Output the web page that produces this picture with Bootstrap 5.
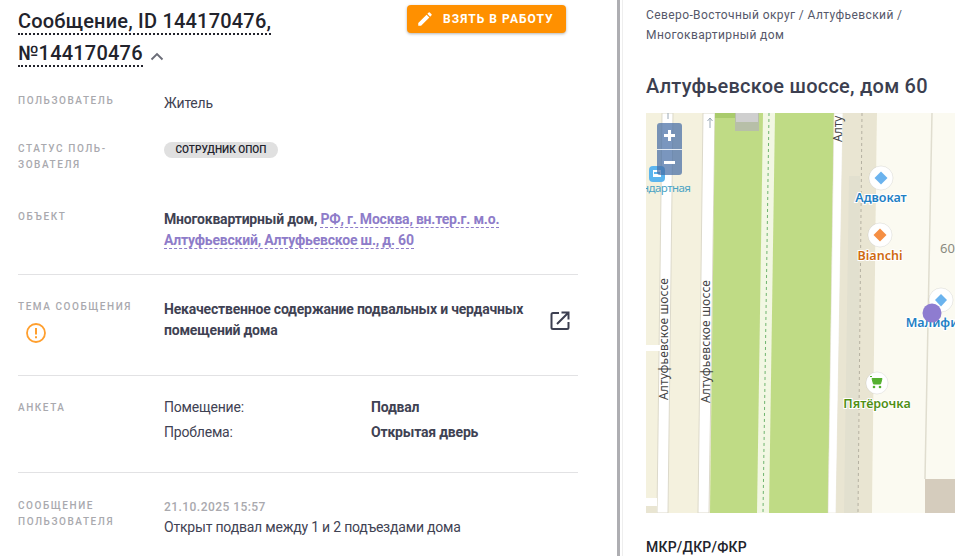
<!DOCTYPE html>
<html lang="ru"><head><meta charset="utf-8"><title>Сообщение</title>
<link href="https://cdn.jsdelivr.net/npm/bootstrap@5.3.0/dist/css/bootstrap.min.css" rel="stylesheet">
<style>
html,body{height:556px;overflow:hidden;background:#fff}
body{font-family:Roboto,"Liberation Sans",sans-serif;color:#3f4253;font-size:14px;letter-spacing:-.2px}
.shell{height:556px;width:955px}
.leftpane{width:617px;padding:0 39px 0 18px;flex:none;overflow:hidden}
.splitter{width:3px;background:#aeaeb2;flex:none}
.rightpane{flex:1;min-width:0;padding:0 0 0 23px;border-left:1px solid #eee;margin-left:2px;overflow:hidden}
.msgtitle{width:280px;font-size:20px;letter-spacing:.2px;line-height:32px;font-weight:500;color:#22232c;margin:0;padding-top:5px}
.msgtitle span{border-bottom:2px dotted #22232c}
.msgtitle svg{margin-left:2px;vertical-align:-1px}
.takebtn{background:#ff9000;color:#fff;font-size:12px;font-weight:700;letter-spacing:1.05px;border:0;border-radius:4px;height:28px;width:159px;margin:5px 12px 0 0;box-shadow:0 1px 3px rgba(0,0,0,.3);padding:0 0 0 9px;gap:9px}
.lbl{width:146px;flex:none;font-size:10px;font-weight:500;letter-spacing:1.56px;line-height:16px;color:#a9a9ae;text-transform:uppercase}
.inforow{display:flex}
.userrow{margin-top:24px;height:48px}
.statusrow{height:68px}
.val{line-height:21px;flex:1;min-width:0}
.chip{display:block;width:114px;margin-top:1px;text-align:center;background:#e0e0e0;color:#22232c;border-radius:8px;font-size:10.1px;font-weight:500;letter-spacing:0;height:16px;line-height:16px}
.bold{font-weight:700}
.addr{color:#8e7cc9;font-weight:700;border-bottom:1px dashed #8e7cc9}
.sep{border-top:1px solid #e2e2e4;margin:0;opacity:1}
.warnic{margin:8px 0 0 8px;display:block}
.topicrow{height:100px;padding-top:24px}
.topictext{width:375px}
.openic{margin:12px 0 0 11px}
.objrow{height:65px}
.formrow{height:96px;padding-top:24px}
.gridq{display:grid;grid-template-columns:207px 1fr;align-content:start;row-gap:2px;line-height:22px;margin-top:-4px}
.msgrow{padding-top:25px}
.stamp{color:#a9a9ae;font-size:12px;font-weight:500;letter-spacing:.45px;line-height:18px;margin-bottom:1px}
.crumbs{font-size:12px;line-height:20px;letter-spacing:.4px;color:#55586a;padding-top:5px;width:285px}
.househ{font-size:20px;line-height:24px;font-weight:500;letter-spacing:.24px;color:#3c3f50;margin:29px 0 0}
.mapbox{height:400px;margin-top:15px;position:relative;overflow:hidden}
.mapbox svg.mp{display:block}
.zoomctl{position:absolute;left:11px;top:10px;width:25px;height:52px;border-radius:3px;background:rgba(70,110,165,.72);display:flex;flex-direction:column}
.zoomctl div{flex:1;display:flex;align-items:center;justify-content:center}
.zoomctl div+div{border-top:1px solid #e4eaf2}
.subh{font-size:14px;font-weight:500;letter-spacing:.2px;color:#22232c;line-height:20px;margin-top:24px}
.pois text{font-weight:600;text-anchor:middle;font-size:12.5px;letter-spacing:0;stroke:#fff;stroke-width:2px;paint-order:stroke}
.mk{stroke:#000;stroke-opacity:.08;stroke-width:1px}
.roadn{font-size:12px;fill:#444;letter-spacing:0}
.gridq{row-gap:3px}
</style></head>
<body>
<div class="shell d-flex">
<div class="leftpane">
  <div class="d-flex justify-content-between align-items-start">
    <h1 class="msgtitle"><span>Сообщение, ID 144170476, №144170476</span> <svg width="14" height="9" viewBox="0 0 14 9"><path d="M1.500 7.500 7 2l5.500 5.500" fill="none" stroke="#6b6d78" stroke-width="1.900"/></svg></h1>
    <button class="takebtn d-flex align-items-center justify-content-start"><svg width="18" height="18" viewBox="0 0 24 24"><path fill="#fff" d="M3 17.250V21h3.750L17.810 9.940l-3.750-3.750L3 17.250zM20.710 7.040a1 1 0 0 0 0-1.410l-2.340-2.340a1 1 0 0 0-1.410 0l-1.830 1.830 3.750 3.750 1.830-1.830z"/></svg><span>ВЗЯТЬ В РАБОТУ</span></button>
  </div>
  <div class="inforow userrow"><div class="lbl">Пользователь</div><div class="val">Житель</div></div>
  <div class="inforow statusrow"><div class="lbl">Статус поль-<br>зователя</div><div class="val"><span class="chip">СОТРУДНИК ОПОП</span></div></div>
  <div class="inforow objrow"><div class="lbl">Объект</div><div class="val"><span class="bold">Многоквартирный дом,</span> <span class="addr">РФ, г. Москва, вн.тер.г. м.о.</span><br><span class="addr">Алтуфьевский, Алтуфьевское ш., д. 60</span></div></div>
  <hr class="sep">
  <div class="inforow topicrow"><div class="lbl">Тема сообщения<svg class="warnic" width="20" height="20" viewBox="0 0 20 20"><circle cx="10" cy="10" r="9" fill="none" stroke="#ff9f2e" stroke-width="1.800"/><path d="M10 5v6.500M10 13.200v2" stroke="#ff9f2e" stroke-width="2"/></svg></div>
    <div class="val bold d-flex"><div class="topictext">Некачественное содержание подвальных и чердачных помещений дома</div><svg class="openic" width="20" height="20" viewBox="0 0 20 20"><path d="M9 2H3a1.500 1.500 0 0 0-1.500 1.500v13A1.500 1.500 0 0 0 3 18h14a1.500 1.500 0 0 0 1.500-1.500V11M7 13 18 2M11.500 1.500h7v7" fill="none" stroke="#3c3f50" stroke-width="2"/></svg></div></div>
  <hr class="sep">
  <div class="inforow formrow"><div class="lbl">Анкета</div><div class="val gridq"><div>Помещение:</div><div class="bold">Подвал</div><div>Проблема:</div><div class="bold">Открытая дверь</div></div></div>
  <hr class="sep">
  <div class="inforow msgrow"><div class="lbl">Сообщение<br>пользователя</div><div class="val"><div class="stamp">21.10.2025 15:57</div><div>Открыт подвал между 1 и 2 подъездами дома</div></div></div>
</div>
<div class="splitter"></div>
<div class="rightpane">
  <div class="crumbs">Северо-Восточный округ / Алтуфьевский / Многоквартирный дом</div>
  <h2 class="househ">Алтуфьевское шоссе, дом 60</h2>
  <div class="mapbox">
    <svg class="mp" width="309" height="400" viewBox="0 0 309 400" font-family="'Noto Sans','DejaVu Sans',sans-serif">
      <rect width="309" height="400" fill="#f4f1de"/>
      <path d="M16 0h11l-5 400H11z" fill="#fff" stroke="#dcd9ca"/>
      <path d="M57 0h12l-6 400H52z" fill="#fff" stroke="#dcd9ca"/>
      <path d="M69 0h119l-6 400H64z" fill="#bfdb85"/>
      <path d="M117 0h12l-6 400h-12z" fill="#f2f7e3"/>
      <path d="M123 0l-6 400" stroke="#6fb56f" stroke-width="1" stroke-dasharray="3 3"/>
      <path d="M188 0h9l-7 400h-8z" fill="#fff" stroke="#dcd9ca" stroke-width=".5"/>
      <path d="M197 0h34l-5 400h-36z" fill="#e9e5d2"/>
      <path d="M203 63h11l-2 337h-14z" fill="#e2e0cf"/>
      <path d="M216 0l-4 400" stroke="#b5b1a2" stroke-dasharray="3 3"/>
      <path d="M231 0h78v400h-83z" fill="#fbfaf1"/>
      <path d="M286 0l-7 366" stroke="#e0ddcf" stroke-width="1.500"/>
      <path d="M279 366h30v34h-30z" fill="#d5ccbd"/>
      <path d="M0 232h16v6H0z" fill="#fff"/>
      <path d="M0 385h11v8H0z" fill="#fff"/><path d="M0 393h10v7H0z" fill="#e9e5d2"/>
      <path d="M69 0h20v5H69z" fill="#a9cb6c"/>
      <path d="M89 0h24v18H89z" fill="#b7bfa8"/><path d="M90 0h22v9H90z" fill="#cfcfcf"/>
      <path d="M64 15V5M61.500 8 64 5l2.500 3M22 6V0" stroke="#9aa8b5" fill="none"/>
      <text class="roadn" transform="translate(196 29) rotate(-90)">Алту</text>
      <text class="roadn" transform="translate(22 287) rotate(-90)" textLength="122">Алтуфьевское шоссе</text>
      <text class="roadn" transform="translate(64 290) rotate(-90)" textLength="123">Алтуфьевское шоссе</text>
      <rect x="3" y="53" width="16" height="16" rx="4" fill="#5cb5ee"/><path d="M7 57h8v7H7z" fill="#fff"/><path d="M8 59h6v2H8z" fill="#5cb5ee"/>
      <text x="-4" y="79" font-size="11.500" letter-spacing="0" fill="#4ba3c4" textLength="49">ндартная</text>
      <circle class="mk" cx="235" cy="65" r="12" fill="#fff"/><path d="M235 58.500l6.500 6.500-6.500 6.500-6.500-6.500z" fill="#6bb3ee"/>
      <circle class="mk" cx="234" cy="122" r="12" fill="#fff"/><path d="M234 115.500l6.500 6.500-6.500 6.500-6.500-6.500z" fill="#f58f44"/>
      <text x="294" y="140" font-size="13" letter-spacing="0" fill="#8a8a80">60</text>
      <circle class="mk" cx="295" cy="187" r="12" fill="#fff"/><path d="M295 181l6 6-6 6.500-6-6.500z" fill="#6bb3ee"/>
      <circle class="mk" cx="231" cy="270" r="11" fill="#fff"/><path d="M226 265.500h10l-1.500 5.500h-7zM224 263.500h2" fill="#55b030" stroke="#55b030"/><circle cx="228" cy="274" r="1.300" fill="#55b030"/><circle cx="234" cy="274" r="1.300" fill="#55b030"/>
      <g class="pois">
      <text x="235" y="89" fill="#1e80c4">Адвокат</text>
      <text x="234" y="147" fill="#cf6a10">Bianchi</text>
      <text x="286" y="214" fill="#1e80c4">Малифи</text>
      <text x="231" y="295" fill="#4f8f14">Пятёрочка</text>
      </g>
      <circle cx="286" cy="200" r="9.500" fill="#8e7cd0"/>
    </svg>
    <div class="zoomctl"><div><svg width="11" height="11" viewBox="0 0 11 11"><path d="M5.500 0v11M0 5.500h11" stroke="#fff" stroke-width="3"/></svg></div><div><svg width="11" height="3" viewBox="0 0 11 3"><path d="M0 1.500h11" stroke="#fff" stroke-width="3"/></svg></div></div>
  </div>
  <div class="subh">МКР/ДКР/ФКР</div>
</div>
</div>
</body></html>
